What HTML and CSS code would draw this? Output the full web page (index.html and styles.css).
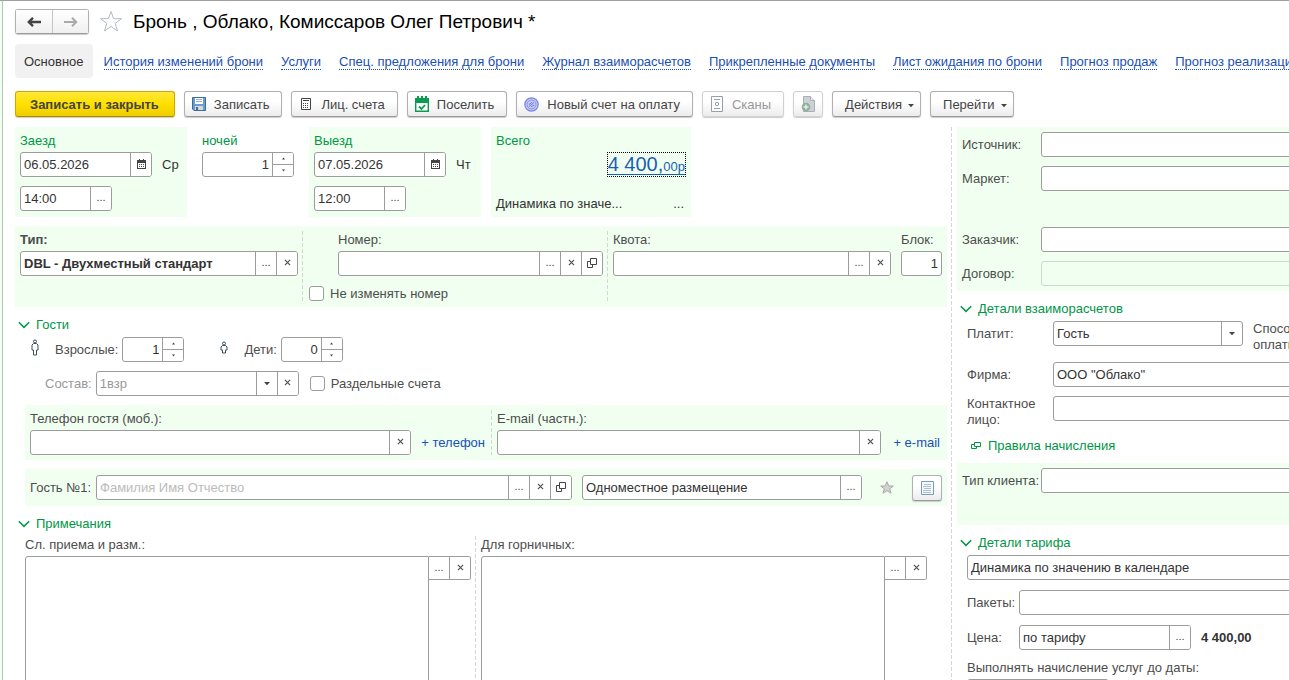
FILE: index.html
```html
<!DOCTYPE html>
<html lang="ru">
<head>
    <meta charset="utf-8">
    <title>Бронь</title>
    <link rel="stylesheet" href="styles.css">
</head>
<body>
<svg class="sprite" aria-hidden="true">
    <symbol id="i-clear" viewBox="0 0 7 7"><path d="M.9.9l5.200 5.200M6.100.9L.9 6.100" stroke="#555" stroke-width="1.200"/></symbol>
    <symbol id="i-open" viewBox="0 0 10 10"><path d="M3.500.5h6v6h-6zM3 3.500H.5v6h5V7" fill="none" stroke="#444"/></symbol>
    <symbol id="i-calendar" viewBox="0 0 9 10"><path d="M0 1h9v9H0z" fill="#444"/><path d="M1 4h7v5H1z" fill="#fff"/><path d="M2 0h1v2H2zM6 0h1v2H6zM2 5h1v1H2zM4 5h1v1H4zM6 5h1v1H6zM2 7h1v1H2zM4 7h1v1H4zM6 7h1v1H6z" fill="#444"/></symbol>
    <symbol id="i-up" viewBox="0 0 5 3"><path d="M1 2.500L2.500.5 4 2.500z" fill="#444"/></symbol>
    <symbol id="i-down" viewBox="0 0 5 3"><path d="M1 .5h3L2.500 2.500z" fill="#444"/></symbol>
    <symbol id="i-chevron" viewBox="0 0 12 8"><path d="M.8 1.200L6 6.400l5.200-5.200" fill="none" stroke="#009646" stroke-width="1.500"/></symbol>
    <symbol id="i-caret" viewBox="0 0 6 4"><path d="M0 0h6L3 3.300z" fill="#444"/></symbol>
</svg>

<div class="page">
    <header class="title-row">
        <div class="history">
            <button type="button" aria-label="Назад"><svg width="14" height="10" viewBox="0 0 14 10"><path d="M14 5H2M6 .8L1.800 5 6 9.200" fill="none" stroke="#444" stroke-width="2.400"/></svg></button>
            <button type="button" aria-label="Вперед"><svg width="14" height="10" viewBox="0 0 14 10"><path d="M0 5h12M8 .8L12.200 5 8 9.200" fill="none" stroke="#aaa" stroke-width="2"/></svg></button>
        </div>
        <svg class="fav" width="24" height="23" viewBox="0 0 24 23"><path d="M12 1.500l2.600 7.200h7.900l-6.300 4.700 2.300 7.600-6.500-4.600L5.500 21l2.300-7.600-6.300-4.700h7.900z" fill="#fff" stroke="#b4bac2"/></svg>
        <h1>Бронь , Облако, Комиссаров Олег Петрович *</h1>
    </header>

    <nav class="tabs">
        <span class="current">Основное</span>
        <a href="#">История изменений брони</a>
        <a href="#">Услуги</a>
        <a href="#">Спец. предложения для брони</a>
        <a href="#">Журнал взаиморасчетов</a>
        <a href="#">Прикрепленные документы</a>
        <a href="#">Лист ожидания по брони</a>
        <a href="#">Прогноз продаж</a>
        <a href="#">Прогноз реализации</a>
    </nav>

    <div class="toolbar">
        <button type="button" class="btn primary">Записать и закрыть</button>
        <button type="button" class="btn"><svg width="14" height="14" viewBox="0 0 14 14"><path d="M.5.500h13v13H2L.5 12z" fill="#6d9bd0" stroke="#3e6a9e"/><path d="M3 1h8v6H3z" fill="#fff"/><path d="M4 2.500h6M4 4.500h6" stroke="#8fb0d8"/><path d="M3 9h8v4H3z" fill="#d5d9dd"/><path d="M4 10h2v3H4z" fill="#3e6a9e"/></svg>Записать</button>
        <button type="button" class="btn"><svg width="14" height="14" viewBox="0 0 14 14"><path d="M2.500 1.500h9v11h-9z" fill="#fff" stroke="#444"/><path d="M4 3.500h6" stroke="#444"/><path d="M4 6.500h6M4 8.500h6M4 10.500h6" stroke="#444" stroke-dasharray="1 1"/></svg>Лиц. счета</button>
        <button type="button" class="btn"><svg width="14" height="16" viewBox="0 0 14 16"><path d="M.7 2.700h12.600v12.600H.7z" fill="#fff" stroke="#0a9a50" stroke-width="1.400"/><path d="M0 2h14v5H0z" fill="#0a9a50"/><path d="M3 0v3M7 0v3M11 0v3" stroke="#0a9a50" stroke-width="2"/><path d="M4 10.500l2.500 2.500L10 9" fill="none" stroke="#0a9a50" stroke-width="1.800"/></svg>Поселить</button>
        <button type="button" class="btn"><svg width="15" height="15" viewBox="0 0 15 15"><circle cx="7.500" cy="7.500" r="6.700" fill="#c3c9f4" stroke="#7c86e0" stroke-width="1.200"/><circle cx="7.500" cy="7.500" r="4.500" fill="none" stroke="#8a93e6"/><path d="M5 9.500l5-4M5 7.500l3-2M7 10l3-2" stroke="#7680dc"/></svg>Новый счет на оплату</button>
        <button type="button" class="btn" disabled><svg width="14" height="16" viewBox="0 0 14 16"><path d="M1.500.500h11v15h-11z" fill="#fff" stroke="#96a0aa"/><path d="M4 3.500h6M4 12.500h6" stroke="#96a0aa"/><circle cx="7" cy="8" r="1.700" fill="none" stroke="#96a0aa"/></svg>Сканы</button>
        <button type="button" class="btn icon-only" disabled aria-label="Добавить файл"><svg width="15" height="16" viewBox="0 0 15 16"><path d="M2.500.500h7l4 4v11h-11z" fill="#ccd1d5" stroke="#a8b0b6"/><path d="M9.500.500v4h4" fill="#eee" stroke="#a8b0b6"/><circle cx="5" cy="11" r="4.300" fill="#8fb098"/><path d="M5 8.500v5M2.500 11h5" stroke="#e4eee6" stroke-width="1.500"/></svg></button>
        <button type="button" class="btn menu">Действия<svg width="6" height="4"><use href="#i-caret"/></svg></button>
        <button type="button" class="btn menu">Перейти<svg width="6" height="4"><use href="#i-caret"/></svg></button>
    </div>

    <form class="columns">
        <div class="main-col">
            <div class="stay">
                <section class="panel date">
                    <label class="green" for="arrival">Заезд</label>
                    <div class="line">
                        <div class="field day"><input id="arrival" type="text" value="06.05.2026"><button type="button" aria-label="Календарь"><svg width="9" height="10"><use href="#i-calendar"/></svg></button></div>
                        <span class="weekday">Ср</span>
                    </div>
                    <div class="field time"><input type="text" value="14:00" aria-label="Время заезда"><button type="button">...</button></div>
                </section>
                <section class="nights">
                    <label class="green" for="nights">ночей</label>
                    <div class="field"><input id="nights" type="number" value="1"><span class="spin"><button type="button" aria-label="Больше"><svg width="5" height="3"><use href="#i-up"/></svg></button><button type="button" aria-label="Меньше"><svg width="5" height="3"><use href="#i-down"/></svg></button></span></div>
                </section>
                <section class="panel date">
                    <label class="green" for="departure">Выезд</label>
                    <div class="line">
                        <div class="field day"><input id="departure" type="text" value="07.05.2026"><button type="button" aria-label="Календарь"><svg width="9" height="10"><use href="#i-calendar"/></svg></button></div>
                        <span class="weekday">Чт</span>
                    </div>
                    <div class="field time"><input type="text" value="12:00" aria-label="Время выезда"><button type="button">...</button></div>
                </section>
                <section class="panel total">
                    <span class="green">Всего</span>
                    <a class="sum" href="#"><span>4 400,<small>00р</small></span></a>
                    <div class="tariff"><span>Динамика по значе...</span><button type="button">...</button></div>
                </section>
            </div>

            <section class="panel room">
                <div class="room-part">
                    <label class="strong" for="room-type">Тип:</label>
                    <div class="field"><input id="room-type" class="strong" type="text" value="DBL - Двухместный стандарт"><button type="button">...</button><button type="button" aria-label="Очистить"><svg width="7" height="7"><use href="#i-clear"/></svg></button></div>
                </div>
                <div class="vline"></div>
                <div class="room-part wide">
                    <div class="indent">
                        <label for="room">Номер:</label>
                        <div class="field"><input id="room" type="text"><button type="button">...</button><button type="button" aria-label="Очистить"><svg width="7" height="7"><use href="#i-clear"/></svg></button><button type="button" aria-label="Открыть"><svg width="10" height="10"><use href="#i-open"/></svg></button></div>
                    </div>
                    <label class="check"><input type="checkbox">Не изменять номер</label>
                </div>
                <div class="vline"></div>
                <div class="room-part">
                    <label for="quota">Квота:</label>
                    <div class="field"><input id="quota" type="text"><button type="button">...</button><button type="button" aria-label="Очистить"><svg width="7" height="7"><use href="#i-clear"/></svg></button></div>
                </div>
                <div class="block">
                    <label for="block">Блок:</label>
                    <div class="field"><input id="block" type="text" class="num" value="1"></div>
                </div>
            </section>

            <h2><svg width="12" height="8"><use href="#i-chevron"/></svg>Гости</h2>
            <div class="guests">
                <div class="line counts">
                    <svg class="adult" width="8" height="17" viewBox="0 0 8 17"><circle cx="4" cy="2.500" r="1.500" fill="none" stroke="#3d4f58"/><path d="M2.500 4.500h3l1.500 1.500v5H5.500v5h-3v-5H1V6z" fill="#fff" stroke="#3d4f58"/></svg>
                    <label for="adults">Взрослые:</label>
                    <div class="field count"><input id="adults" type="number" value="1"><span class="spin"><button type="button" aria-label="Больше"><svg width="5" height="3"><use href="#i-up"/></svg></button><button type="button" aria-label="Меньше"><svg width="5" height="3"><use href="#i-down"/></svg></button></span></div>
                    <svg class="child" width="8" height="17" viewBox="0 0 8 17"><circle cx="4" cy="4.500" r="1.500" fill="none" stroke="#3d4f58"/><path d="M2.500 6.500h3L7 8v3H5.500v3h-3v-3H1V8z" fill="#fff" stroke="#3d4f58"/></svg>
                    <label for="children">Дети:</label>
                    <div class="field count"><input id="children" type="number" value="0"><span class="spin"><button type="button" aria-label="Больше"><svg width="5" height="3"><use href="#i-up"/></svg></button><button type="button" aria-label="Меньше"><svg width="5" height="3"><use href="#i-down"/></svg></button></span></div>
                </div>
                <div class="line party">
                    <label class="muted" for="party">Состав:</label>
                    <div class="field"><select id="party" class="muted"><option>1взр</option></select><button type="button" aria-label="Очистить"><svg width="7" height="7"><use href="#i-clear"/></svg></button></div>
                    <label class="check"><input type="checkbox">Раздельные счета</label>
                </div>

                <section class="panel contacts">
                    <div class="contact">
                        <label for="phone">Телефон гостя (моб.):</label>
                        <div class="line"><div class="field"><input id="phone" type="tel"><button type="button" aria-label="Очистить"><svg width="7" height="7"><use href="#i-clear"/></svg></button></div><a class="add" href="#">+ телефон</a></div>
                    </div>
                    <div class="vline"></div>
                    <div class="contact short">
                        <label for="email">E-mail (частн.):</label>
                        <div class="line"><div class="field"><input id="email" type="email"><button type="button" aria-label="Очистить"><svg width="7" height="7"><use href="#i-clear"/></svg></button></div><a class="add" href="#">+ e-mail</a></div>
                    </div>
                </section>

                <section class="panel guest">
                    <label for="guest">Гость №1:</label>
                    <div class="field name"><input id="guest" type="text" placeholder="Фамилия Имя Отчество"><button type="button">...</button><button type="button" aria-label="Очистить"><svg width="7" height="7"><use href="#i-clear"/></svg></button><button type="button" aria-label="Открыть"><svg width="10" height="10"><use href="#i-open"/></svg></button></div>
                    <div class="field placing"><input type="text" value="Одноместное размещение" aria-label="Размещение"><button type="button">...</button></div>
                    <svg class="mark" width="14" height="13" viewBox="0 0 14 13"><path d="M7 .7l1.700 4.200 4.600.2-3.600 2.800 1.300 4.300L7 9.700l-4 2.500 1.300-4.300L.7 5.100l4.600-.2z" fill="#d2d2d2" stroke="#a9a9a9"/></svg>
                    <button type="button" class="btn icon-only" aria-label="Карточка гостя"><svg width="13" height="14" viewBox="0 0 13 14"><path d="M.5.500h12v13H.5z" fill="#f4f8fc" stroke="#7e9ab5"/><path d="M3 3.500h7M2 5.500h8M3 7.500h7M2 9.500h8M2 11.500h8" stroke="#a9bfd4"/></svg></button>
                </section>
            </div>

            <h2><svg width="12" height="8"><use href="#i-chevron"/></svg>Примечания</h2>
            <div class="notes">
                <div class="note">
                    <label for="note-desk">Сл. приема и разм.:</label>
                    <div class="memo"><textarea id="note-desk"></textarea><div class="memo-tools"><button type="button">...</button><button type="button" aria-label="Очистить"><svg width="7" height="7"><use href="#i-clear"/></svg></button></div></div>
                </div>
                <div class="vline"></div>
                <div class="note">
                    <label for="note-maid">Для горничных:</label>
                    <div class="memo"><textarea id="note-maid"></textarea><div class="memo-tools"><button type="button">...</button><button type="button" aria-label="Очистить"><svg width="7" height="7"><use href="#i-clear"/></svg></button></div></div>
                </div>
            </div>
        </div>

        <div class="vline"></div>

        <div class="side-col">
            <section class="panel pairs source">
                <label for="source">Источник:</label><div class="field"><input id="source" type="text"></div>
                <label for="market">Маркет:</label><div class="field"><input id="market" type="text"></div>
                <label class="apart" for="customer">Заказчик:</label><div class="field apart"><input id="customer" type="text"></div>
                <label for="contract">Договор:</label><div class="field off"><input id="contract" type="text" disabled></div>
            </section>

            <h2><svg width="12" height="8"><use href="#i-chevron"/></svg>Детали взаиморасчетов</h2>
            <div class="pairs payment">
                <label for="payer">Платит:</label>
                <div class="line payer">
                    <div class="field"><select id="payer"><option>Гость</option></select></div>
                    <label class="two" for="method">Способ<br>оплаты:</label>
                    <div class="field method"><input id="method" type="text"></div>
                </div>
                <label for="firm">Фирма:</label><div class="field"><input id="firm" type="text" value='ООО "Облако"'></div>
                <label class="two" for="contact">Контактное лицо:</label><div class="field"><input id="contact" type="text"></div>
            </div>
            <a class="rules" href="#"><svg width="10" height="8" viewBox="0 0 10 8"><path d="M3.500.500h6v4h-6zM3 2.500H.5v4h5V5" fill="none" stroke="#009646"/></svg>Правила начисления</a>
            <section class="panel pairs client">
                <label for="client">Тип клиента:</label><div class="field"><input id="client" type="text"></div>
            </section>

            <h2><svg width="12" height="8"><use href="#i-chevron"/></svg>Детали тарифа</h2>
            <div class="rate">
                <div class="field"><input type="text" value="Динамика по значению в календаре" aria-label="Тариф"></div>
                <div class="line"><label for="packs">Пакеты:</label><div class="field"><input id="packs" type="text"></div></div>
                <div class="line"><label for="price">Цена:</label><div class="field price"><input id="price" type="text" value="по тарифу"><button type="button">...</button></div><b>4 400,00</b></div>
                <div class="until">
                    <label for="until">Выполнять начисление услуг до даты:</label>
                    <div class="field"><input id="until" type="text"></div>
                </div>
            </div>
        </div>
    </form>
</div>
</body>
</html>
```

FILE: styles.css
```css
* {
    box-sizing: border-box;
}
body {
    margin: 0;
    padding-left: 2px;
    border-top: 1px solid #a0a0a0;
    font: 13px/17px "Liberation Sans", Arial, sans-serif;
    color: #333;
    background-color: #f0fff0;
}
button, input, select, textarea {
    font: inherit;
    color: inherit;
    margin: 0;
}
svg {
    flex: none;
}
label {
    color: #4d4d4d;
    white-space: nowrap;
}
.sprite {
    display: none;
}
.page {
    height: calc(100vh - 1px);
    overflow: hidden;
    display: flex;
    flex-direction: column;
    padding: 8px 0 0 12px;
    border-left: 1px solid #b4c4b4;
    background-color: #fff;
}

/* header */
.title-row {
    display: flex;
    align-items: center;
    height: 25px;
}
.history {
    display: flex;
    border: 1px solid #b0b0b0;
    border-bottom-color: #999;
    border-radius: 3px;
    height: 25px;
    box-shadow: 0 1px 1px #ccc;
}
.history button {
    display: flex;
    align-items: center;
    justify-content: center;
    width: 36px;
    padding: 0;
    border: 0;
    background: linear-gradient(#fff, #f0f0f0);
}
.history button + button {
    border-left: 1px solid #c4c4c4;
}
.fav {
    margin: 0 10px;
}
h1 {
    margin: 0;
    font-size: 19px;
    line-height: 25px;
    font-weight: normal;
    color: #000;
    white-space: nowrap;
}
.tabs {
    display: flex;
    align-items: center;
    gap: 18px;
    height: 34px;
    margin-top: 10px;
    white-space: nowrap;
}
.tabs .current {
    background-color: #f1f1f1;
    border-radius: 4px;
    padding: 2px 9px 0;
    line-height: 32px;
    margin-right: -7px;
}
.tabs a {
    color: #1a4fb4;
    text-decoration: none;
    line-height: 14px;
    margin-top: 2px;
    border-bottom: 1px dotted #1a4fb4;
}
.toolbar {
    display: flex;
    gap: 9px;
    margin: 13px 0 10px;
}
.btn {
    display: flex;
    align-items: center;
    justify-content: center;
    gap: 8px;
    height: 26px;
    padding: 0 12px 0 7px;
    border: 1px solid #b0b0b0;
    border-bottom-color: #999;
    border-radius: 3px;
    background: linear-gradient(#fff 40%, #ececec);
    box-shadow: 0 1px 1px #ccc;
    color: #444;
    white-space: nowrap;
}
.btn.primary {
    padding: 0 15px 0 14px;
    font-weight: bold;
    border-color: #c9a800;
    border-bottom-color: #a88c00;
    background: linear-gradient(#ffe838, #ffe000 50%, #efcd00);
}
.btn.icon-only {
    width: 30px;
    padding: 0;
}
.btn.menu {
    gap: 6px;
    padding: 0 6px 0 12px;
}
.btn.menu svg {
    margin-top: 3px;
}
.btn:disabled {
    color: #999;
    border-color: #d0d0d0;
}

/* fields */
.field {
    display: flex;
    height: 25px;
    border: 1px solid #9c9c9c;
    border-radius: 3px;
    background-color: #fff;
    overflow: hidden;
}
.field input, .field select {
    flex: 1;
    min-width: 0;
    width: 100%;
    padding: 0 3px;
    border: 0;
    outline: 0;
    background-color: transparent;
}
.field select {
    appearance: none;
    padding-right: 24px;
    background: url("data:image/svg+xml,%3Csvg xmlns='http://www.w3.org/2000/svg' width='21' height='23'%3E%3Cpath d='M.5 0v23' stroke='%239c9c9c'/%3E%3Cpath d='M8 10h6l-3 3.300z' fill='%23444'/%3E%3C/svg%3E") no-repeat right;
}
.field input[type=number] {
    appearance: textfield;
    text-align: right;
}
.field input::-webkit-inner-spin-button {
    display: none;
}
.field .num {
    text-align: right;
}
.field input::placeholder {
    color: #bbb;
}
.field button, .memo-tools button {
    display: flex;
    align-items: center;
    justify-content: center;
    flex: none;
    width: 21px;
    padding: 0 0 2px;
    border: 0;
    border-left: 1px solid #9c9c9c;
    background-color: #fff;
    color: #444;
    font-size: 11px;
}
.spin {
    display: flex;
    flex-direction: column;
}
.field .spin button {
    flex: 1;
    padding: 0;
}
.field .spin button + button {
    border-top: 1px solid #9c9c9c;
}
.field.off {
    border-color: #cfd6cf;
    background-color: transparent;
}
.line {
    display: flex;
    align-items: center;
}
.check {
    display: flex;
    align-items: center;
    gap: 6px;
}
.check input {
    appearance: none;
    width: 15px;
    height: 15px;
    border: 1px solid #9c9c9c;
    border-radius: 3px;
    background-color: #fff;
}
.vline {
    flex: none;
    width: 1px;
    background: repeating-linear-gradient(#d3d8d3 0 4px, transparent 4px 6px);
}
.panel {
    background-color: #f0fff0;
    padding: 5px;
}
.green, h2 {
    color: #009646;
}
.strong {
    font-weight: bold;
}
.muted, .field .muted {
    color: #999;
}
h2 {
    display: flex;
    align-items: center;
    gap: 6px;
    margin: 0;
    padding-left: 3px;
    font-size: 13px;
    line-height: 17px;
    font-weight: normal;
}

/* columns */
.columns {
    display: grid;
    grid-template-columns: minmax(0, 1fr) 1px 333px;
    column-gap: 4px;
    flex: 1;
    min-height: 0;
}
.stay {
    display: flex;
    height: 90px;
    margin-bottom: 9px;
}
.stay .green {
    display: block;
    margin-bottom: 3px;
}
.date {
    width: 172px;
}
.day {
    width: 132px;
}
.weekday {
    margin-left: 10px;
}
.time {
    width: 92px;
    margin-top: 9px;
}
.nights {
    width: 92px;
    margin: 5px 15px 0;
}
.total {
    display: flex;
    flex-direction: column;
    width: 200px;
    margin-left: 10px;
}
.sum {
    align-self: flex-end;
    height: 25px;
    border: 1px dotted #000;
    color: #1a5fb4;
    font-size: 20px;
    line-height: 23px;
    text-decoration: none;
}
.sum span {
    display: block;
    height: 22px;
    border-bottom: 1px solid #1a5fb4;
}
.sum small {
    font-size: 13px;
}
.tariff {
    display: flex;
    justify-content: space-between;
    margin-top: 18px;
}
.tariff button {
    border: 0;
    padding: 0 2px;
    background: none;
}
.room {
    display: flex;
    height: 81px;
    margin-bottom: 9px;
}
.room label, .contact > label {
    display: block;
    margin-bottom: 3px;
}
.room .vline {
    margin: 0 5px 0 4px;
    height: 70px;
}
.room-part {
    flex: 278;
    min-width: 0;
}
.room-part.wide {
    flex-grow: 295;
}
.room .indent {
    padding-left: 30px;
}
.room .check {
    display: flex;
    margin: 9px 0 0 1px;
}
.block {
    width: 41px;
    margin-left: 10px;
}
.guests {
    padding: 4px 0 9px 10px;
}
.counts .adult {
    margin: 0 16px 4px 6px;
}
.counts .child {
    margin: 0 16px 4px 36px;
}
.count {
    width: 62px;
    margin-left: 4px;
}
.party {
    margin: 9px 0;
    padding-left: 20px;
}
.party .field {
    width: 203px;
    margin: 0 11px 0 4px;
}
.contacts {
    display: flex;
    margin-bottom: 9px;
}
.contact {
    flex: 455;
    min-width: 0;
}
.contact.short {
    flex-grow: 445;
}
.contact .field {
    flex: 1;
}
.contacts .vline {
    margin: 0 5px 0 6px;
}
.add {
    margin-left: 10px;
    color: #1a4fb4;
    text-decoration: none;
}
.short .add {
    margin: 0 2px 0 12px;
}
.guest {
    display: flex;
    align-items: center;
    height: 37px;
}
.guest .name {
    flex: 1;
    margin: 0 10px 0 5px;
}
.guest .placing {
    width: 280px;
}
.mark {
    margin: 0 18px;
}
.notes {
    display: flex;
    padding: 4px 20px 0 10px;
}
.notes .vline {
    margin: 0 5px 0 4px;
}
.note {
    flex: 1;
}
.note label {
    display: block;
    margin-bottom: 3px;
}
.memo {
    display: flex;
    align-items: flex-start;
}
.memo textarea {
    flex: 1;
    min-width: 0;
    height: 160px;
    border: 1px solid #9c9c9c;
    border-radius: 3px 0 0 3px;
    outline: 0;
    resize: none;
}
.memo-tools {
    display: flex;
    height: 24px;
    border: 1px solid #9c9c9c;
    border-left: 0;
    border-radius: 0 3px 3px 0;
    overflow: hidden;
}
.memo-tools button:first-child {
    width: 20px;
    border-left: 0;
}

/* right column runs past the window edge */
.side-col {
    margin: 0 -20px 0 1px;
}
.pairs {
    display: grid;
    grid-template-columns: 74px 1fr;
    column-gap: 5px;
    row-gap: 9px;
    align-items: center;
}
.source {
    margin-bottom: 9px;
}
.pairs .apart {
    margin-top: 27px;
}
.payment {
    grid-template-columns: 81px 1fr;
    padding: 4px 0 0 10px;
    align-items: start;
}
.payment label {
    line-height: 25px;
}
.payment .two {
    line-height: 16px;
    white-space: normal;
}
.payer {
    align-items: flex-start;
    height: 32px;
}
.payer .field {
    width: 190px;
    flex: none;
}
.payer .two {
    margin-left: 10px;
}
.rules {
    display: flex;
    align-items: center;
    gap: 7px;
    margin: 9px 0 9px 14px;
    color: #009646;
    text-decoration: none;
}
.client {
    height: 62px;
    align-items: start;
    margin-bottom: 9px;
}
.client label {
    line-height: 25px;
}
.rate {
    display: flex;
    flex-direction: column;
    gap: 10px;
    padding: 4px 0 0 10px;
}
.rate .line label {
    width: 52px;
}
.rate .line .field {
    flex: 1;
}
.rate .line .price {
    flex: none;
    width: 172px;
    margin-right: 10px;
}
.until label {
    display: block;
    line-height: 16px;
}
.until .field {
    width: 142px;
    margin-top: 3px;
}
```
